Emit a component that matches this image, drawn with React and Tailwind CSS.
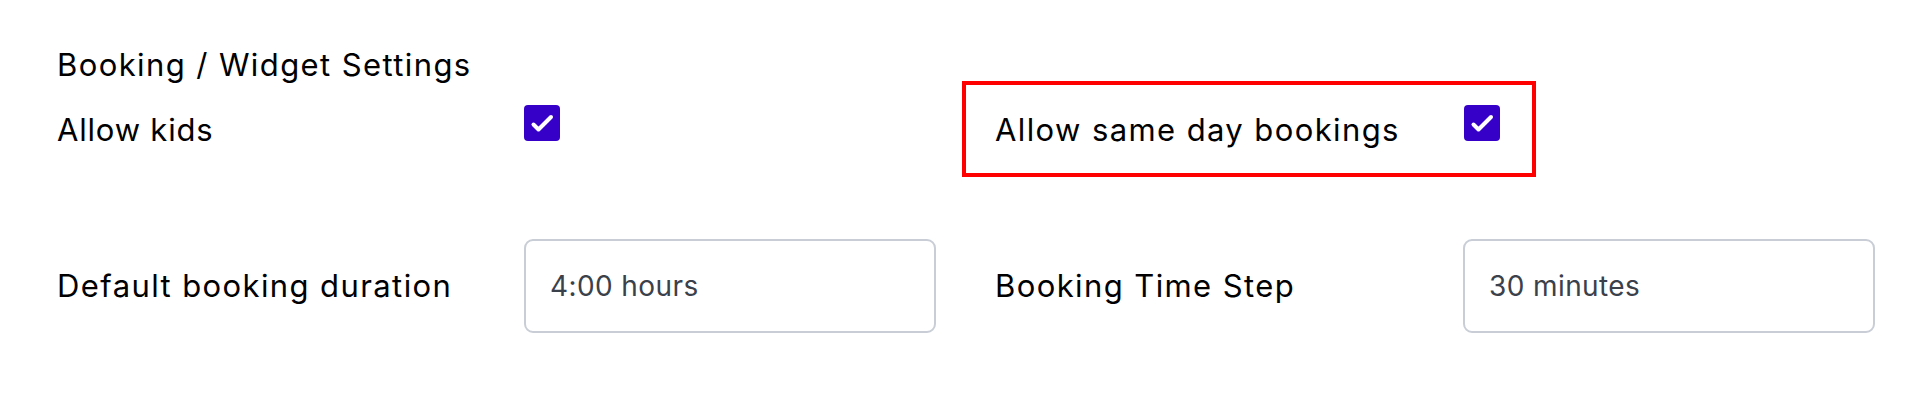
import React, { useState } from "react";

function Checkbox({ checked, onChange }) {
  return (
    <button
      type="button"
      onClick={() => onChange(!checked)}
      className={`w-[36px] h-[36px] rounded-[4px] flex items-center justify-center ${
        checked ? "bg-[#3600c8]" : "bg-white border-2 border-gray-300"
      }`}
    >
      {checked && (
        <svg width="36" height="36" viewBox="0 0 36 36" fill="none">
          <path
            d="M9.5 19.5 L14.5 24.5 L27 12"
            stroke="white"
            strokeWidth="4"
            strokeLinecap="round"
            strokeLinejoin="round"
          />
        </svg>
      )}
    </button>
  );
}

function TextField({ value }) {
  return (
    <div className="h-[94px] w-[412px] border-2 border-[#c9ced6] rounded-[9px] flex items-center pl-[24px] text-[28px] tracking-[0.4px] text-[#3b414b]">
      {value}
    </div>
  );
}

export default function App() {
  const [kids, setKids] = useState(true);
  const [sameDay, setSameDay] = useState(true);

  return (
    <div
      className="w-[1932px] h-[416px] bg-white text-black px-[57px] pt-[47px]"
      style={{ fontFamily: "Inter, 'Noto Sans', sans-serif" }}
    >
      <h2 className="text-[31px] leading-[36px] tracking-[1.4px] font-normal mb-[22px]">
        Booking / Widget Settings
      </h2>

      {/* checkbox row */}
      <div className="grid grid-cols-2 gap-x-[58px]">
        <div className="grid grid-cols-[467px_1fr] items-start">
          <span className="text-[31px] leading-[36px] tracking-[0.8px] mt-[7px]">Allow kids</span>
          <Checkbox checked={kids} onChange={setKids} />
        </div>
        <div className="relative grid grid-cols-[469px_1fr] items-start">
          <div className="absolute -left-[33px] -top-[24px] w-[574px] h-[96px] border-4 border-[#ff0000] pointer-events-none" />
          <span className="text-[31px] leading-[36px] tracking-[1.4px] mt-[7px]">
            Allow same day bookings
          </span>
          <Checkbox checked={sameDay} onChange={setSameDay} />
        </div>
      </div>

      {/* duration row */}
      <div className="grid grid-cols-2 gap-x-[58px] mt-[91px]">
        <div className="grid grid-cols-[467px_1fr] items-center">
          <span className="text-[31px] leading-[36px] tracking-[1.4px]">Default booking duration</span>
          <TextField value="4:00 hours" />
        </div>
        <div className="grid grid-cols-[468px_1fr] items-center">
          <span className="text-[31px] leading-[36px] tracking-[1.4px]">Booking Time Step</span>
          <TextField value="30 minutes" />
        </div>
      </div>
    </div>
  );
}
